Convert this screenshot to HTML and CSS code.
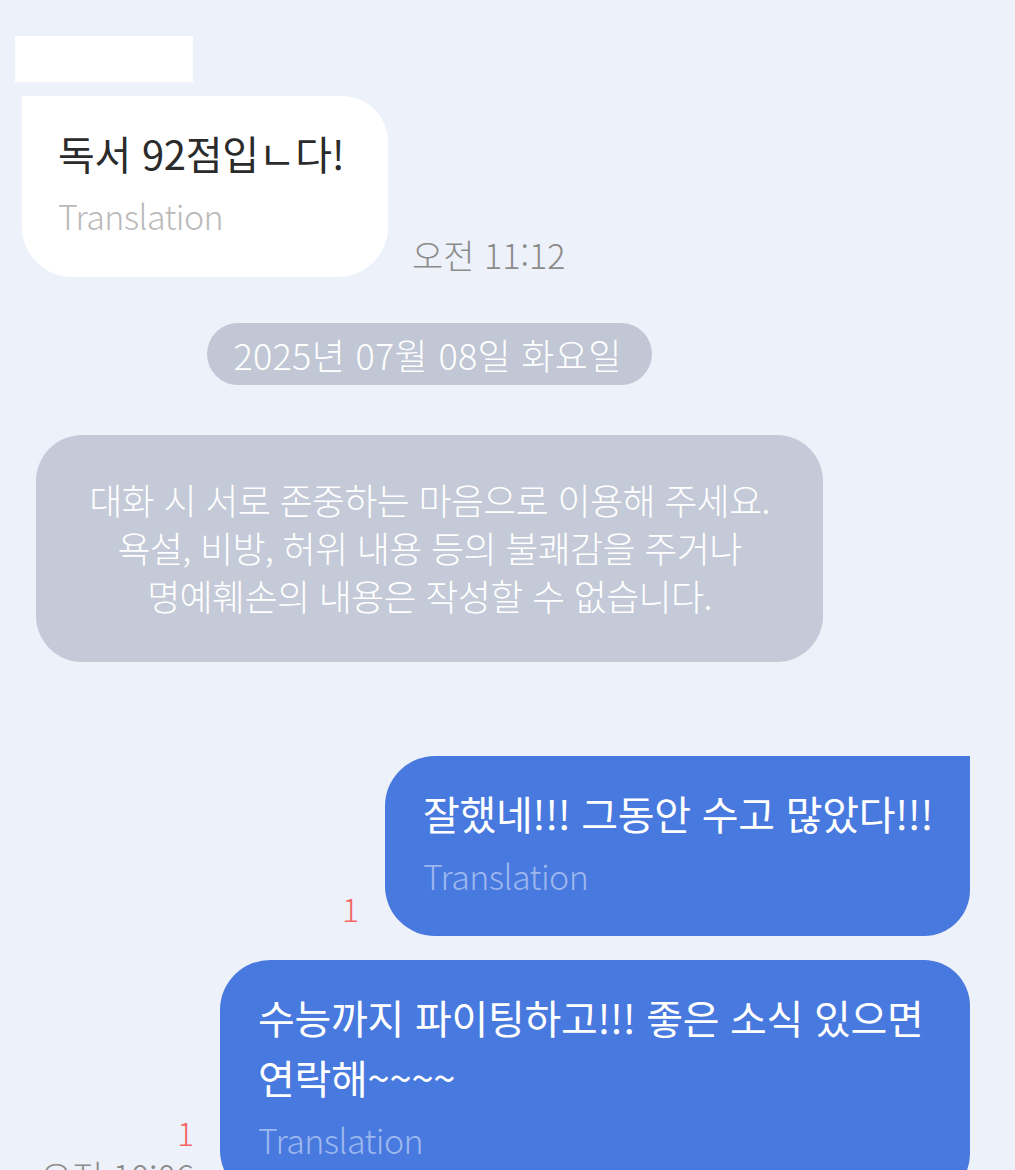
FILE: index.html
```html
<!DOCTYPE html>
<html lang="ko">
<head>
<meta charset="utf-8">
<title>Chat</title>
<link rel="stylesheet" href="styles.css">
</head>
<body>
<div class="chat">
  <div class="name-box"></div>

  <div class="row row-in">
    <div class="bubble bubble-in">
      <div class="msg">독서 92점입ㄴ다!</div>
      <div class="trans">Translation</div>
    </div>
    <div class="meta meta-in">
      <span class="time">오전 11:12</span>
    </div>
  </div>

  <div class="center">
    <div class="date-pill">2025년 07월 08일 화요일</div>
    <div class="notice">대화 시 서로 존중하는 마음으로 이용해 주세요.<br>욕설, 비방, 허위 내용 등의 불쾌감을 주거나<br>명예훼손의 내용은 작성할 수 없습니다.</div>
  </div>

  <div class="row row-out first-out">
    <div class="meta meta-out">
      <span class="unread">1</span>
    </div>
    <div class="bubble bubble-out square-top">
      <div class="msg">잘했네!!! 그동안 수고 많았다!!!</div>
      <div class="trans">Translation</div>
    </div>
  </div>

  <div class="row row-out second-out">
    <div class="meta meta-out">
      <span class="unread">1</span>
      <span class="time">오전 10:06</span>
    </div>
    <div class="bubble bubble-out wide">
      <div class="msg">수능까지 파이팅하고!!! 좋은 소식 있으면 연락해~~~~</div>
      <div class="trans">Translation</div>
    </div>
  </div>
</div>
</body>
</html>
```

FILE: styles.css
```css
html, body {
  margin: 0;
  padding: 0;
}
body {
  width: 1015px;
  height: 1170px;
  overflow: hidden;
  background: #edf1fa;
  font-family: "Noto Sans CJK KR", "Noto Sans", sans-serif;
}
.chat {
  display: flex;
  flex-direction: column;
}
.name-box {
  margin: 36px 0 0 15px;
  width: 178px;
  height: 46px;
  background: #ffffff;
}
.row {
  display: flex;
  align-items: flex-end;
}
.row-in {
  margin-top: 14px;
  padding-left: 22px;
}
.row-out {
  justify-content: flex-end;
  padding-right: 45px;
}
.first-out {
  margin-top: 94px;
}
.second-out {
  margin-top: 24px;
}
.bubble {
  box-sizing: border-box;
  padding: 27px 37px 39px 36px;
}
.bubble-in {
  background: #ffffff;
  border-radius: 0 46px 50px 50px;
  width: 366px;
  color: #2b2b2b;
}
.bubble-out {
  background: #4879de;
  color: #ffffff;
  border-radius: 50px 46px 46px 50px;
  padding-left: 38px;
  padding-bottom: 38px;
}
.square-top {
  border-top-right-radius: 0;
}
.wide {
  width: 750px;
}
.msg {
  font-size: 40px;
  line-height: 60px;
  letter-spacing: -0.3px;
}
.trans {
  margin-top: 11px;
  font-size: 34px;
  line-height: 44px;
  letter-spacing: -0.6px;
  font-weight: 300;
}
.bubble-in .trans {
  color: #bababa;
}
.bubble-out .trans {
  color: #9db7ef;
}
.meta {
  display: flex;
  flex-direction: column;
  align-items: flex-end;
}
.meta-in {
  margin-left: 24px;
  margin-bottom: 2px;
}
.meta-out {
  margin-right: 26px;
  margin-bottom: 4px;
}
.time {
  font-size: 34px;
  line-height: 40px;
  color: #8b8b8b;
  font-weight: 300;
}
.unread {
  font-size: 32px;
  line-height: 40px;
  color: #f46563;
  font-weight: 300;
  margin-bottom: 4px;
}
.center {
  width: 859px;
  display: flex;
  flex-direction: column;
  align-items: center;
}
.date-pill {
  margin-top: 46px;
  height: 62px;
  line-height: 62px;
  padding: 0 30px 0 26px;
  border-radius: 31px;
  background: #c1c7d5;
  color: #ffffff;
  font-size: 36px;
  letter-spacing: 0.3px;
  font-weight: 300;
}
.notice {
  margin-top: 50px;
  box-sizing: border-box;
  width: 787px;
  height: 227px;
  padding: 40px 0 0;
  border-radius: 46px;
  background: #c5cad8;
  color: #ffffff;
  text-align: center;
  font-size: 36px;
  line-height: 48px;
  letter-spacing: -0.7px;
  font-weight: 300;
}
```
